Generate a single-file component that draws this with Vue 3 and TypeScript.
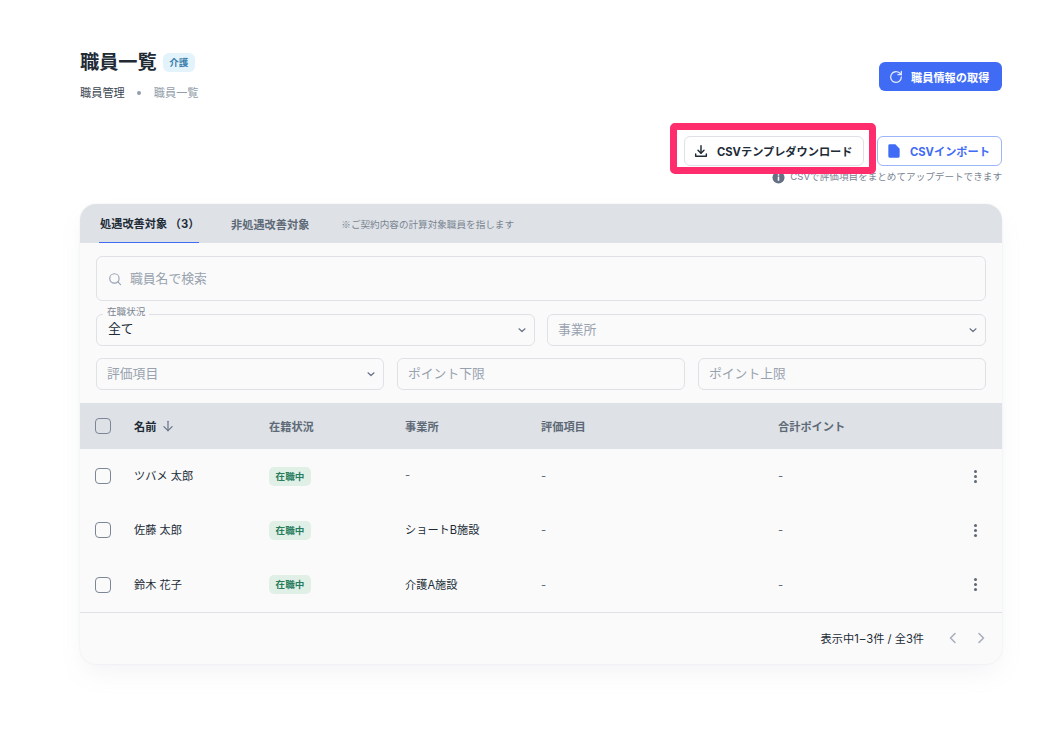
<script setup lang="ts">
interface Staff {
  name: string
  office: string
}
const columns = ['在籍状況', '事業所', '評価項目', '合計ポイント']
const staff: Staff[] = [
  { name: 'ツバメ 太郎', office: '-' },
  { name: '佐藤 太郎', office: 'ショートB施設' },
  { name: '鈴木 花子', office: '介護A施設' },
]
</script>

<template>
  <main class="page">
    <header class="head">
      <div>
        <div class="title-row">
          <h1>職員一覧</h1>
          <span class="care">介護</span>
        </div>
        <nav class="crumbs">
          <span>職員管理</span>
          <i class="dot"></i>
          <span class="muted">職員一覧</span>
        </nav>
      </div>
      <button class="btn primary">
        <svg width="16" height="16" viewBox="0 0 24 24" fill="none" stroke="currentColor" stroke-width="2" stroke-linecap="round" stroke-linejoin="round">
          <path d="M20 12a8 8 0 1 1-2.600-5.900L20 8.400" />
          <path d="M20 3.500v5h-5" />
        </svg>
        職員情報の取得
      </button>
    </header>

    <section class="actions">
      <div class="action-btns">
        <div class="highlighted">
          <button class="btn outline">
            <svg width="16" height="16" viewBox="0 0 24 24" fill="none" stroke="currentColor" stroke-width="2.200" stroke-linecap="round" stroke-linejoin="round">
              <path d="M12 4v11" />
              <path d="M7.500 11l4.500 4.500 4.500-4.500" />
              <path d="M4 16.500V20h16v-3.500" />
            </svg>
            CSVテンプレダウンロード
          </button>
          <span class="mark"></span>
        </div>
        <button class="btn import">
          <svg width="16" height="16" viewBox="0 0 24 24" fill="currentColor">
            <path d="M5.500 2H14l6.500 6.500V20a2 2 0 0 1-2 2h-13a2 2 0 0 1-2-2V4a2 2 0 0 1 2-2z" />
          </svg>
          CSVインポート
        </button>
      </div>
      <p class="hint">
        <svg width="13" height="13" viewBox="0 0 14 14">
          <circle cx="7" cy="7" r="6.500" fill="#667085" />
          <rect x="6.200" y="6" width="1.600" height="4.500" fill="#fff" />
          <rect x="6.200" y="3.400" width="1.600" height="1.600" fill="#fff" />
        </svg>
        CSVで評価項目をまとめてアップデートできます
      </p>
    </section>

    <section class="card">
      <div class="tabs">
        <span class="tab active">処遇改善対象 （3）</span>
        <span class="tab">非処遇改善対象</span>
        <span class="tab-note">※ご契約内容の計算対象職員を指します</span>
      </div>

      <div class="filters">
        <div class="field search">
          <svg width="14" height="14" viewBox="0 0 24 24" fill="none" stroke="#98a2b3" stroke-width="2" stroke-linecap="round">
            <circle cx="11" cy="11" r="8" />
            <path d="M17 17l4.500 4.500" />
          </svg>
          <span class="placeholder">職員名で検索</span>
        </div>
        <div class="two">
          <div class="field select">
            <span class="legend">在職状況</span>
            <span class="value">全て</span>
            <svg class="chev" width="10" height="10" viewBox="0 0 10 10" fill="none" stroke="#667085" stroke-width="1.200" stroke-linecap="round" stroke-linejoin="round"><path d="M2 3.800l3 2.700 3-2.700" /></svg>
          </div>
          <div class="field select">
            <span class="placeholder">事業所</span>
            <svg class="chev" width="10" height="10" viewBox="0 0 10 10" fill="none" stroke="#667085" stroke-width="1.200" stroke-linecap="round" stroke-linejoin="round"><path d="M2 3.800l3 2.700 3-2.700" /></svg>
          </div>
        </div>
        <div class="three">
          <div class="field select">
            <span class="placeholder">評価項目</span>
            <svg class="chev" width="10" height="10" viewBox="0 0 10 10" fill="none" stroke="#667085" stroke-width="1.200" stroke-linecap="round" stroke-linejoin="round"><path d="M2 3.800l3 2.700 3-2.700" /></svg>
          </div>
          <div class="field select"><span class="placeholder">ポイント下限</span></div>
          <div class="field select"><span class="placeholder">ポイント上限</span></div>
        </div>
      </div>

      <div class="grid-row thead">
        <span class="check"></span>
        <span class="name-head">
          名前
          <svg width="14" height="14" viewBox="0 0 24 24" fill="none" stroke="#667085" stroke-width="2" stroke-linecap="round" stroke-linejoin="round">
            <path d="M12 4v16" />
            <path d="M5 13l7 7 7-7" />
          </svg>
        </span>
        <span v-for="c in columns" :key="c">{{ c }}</span>
        <span></span>
      </div>

      <div v-for="s in staff" :key="s.name" class="grid-row tbody">
        <span class="check"></span>
        <span class="cell">{{ s.name }}</span>
        <span class="badge-cell"><em class="status">在職中</em></span>
        <span class="cell" :class="{ dash: s.office === '-' }">{{ s.office }}</span>
        <span class="dash">-</span>
        <span class="dash">-</span>
        <span class="more"><i></i><i></i><i></i></span>
      </div>

      <footer class="foot">
        <span class="count">表示中1<b class="range">–</b>3件 / 全3件</span>
        <svg class="pager" width="16" height="16" viewBox="0 0 16 16" fill="none" stroke="#a8b0bc" stroke-width="1.600" stroke-linecap="round" stroke-linejoin="round"><path d="M10 3.500L5.500 8l4.500 4.500" /></svg>
        <svg class="pager" width="16" height="16" viewBox="0 0 16 16" fill="none" stroke="#a8b0bc" stroke-width="1.600" stroke-linecap="round" stroke-linejoin="round"><path d="M6 3.500L10.500 8 6 12.500" /></svg>
      </footer>
    </section>
  </main>
</template>

<style>
html, body { margin: 0; background: #fff; }
</style>

<style scoped>
.page {
  box-sizing: border-box;
  width: 1063px;
  height: 745px;
  padding: 50px 61px 0 80px;
  font-family: Inter, "Noto Sans CJK JP", sans-serif;
  color: #212b36;
  overflow: hidden;
}
.head {
  display: flex;
  justify-content: space-between;
  align-items: flex-start;
  height: 73px;
}
.title-row {
  display: flex;
  align-items: center;
  gap: 6px;
  height: 25px;
}
h1 {
  margin: 0;
  font-size: 19.200px;
  line-height: 25px;
  font-weight: 700;
}
.care {
  display: block;
  width: 32px;
  height: 19px;
  border-radius: 6px;
  background: #e3f3fb;
  color: #3a7fac;
  font-size: 9.600px;
  font-weight: 700;
  line-height: 19px;
  text-align: center;
}
.crumbs {
  display: flex;
  align-items: center;
  margin-top: 9px;
  font-size: 11.200px;
  line-height: 18px;
  color: #3c4651;
}
.dot {
  width: 4px;
  height: 4px;
  margin: 0 13px 0 12px;
  border-radius: 50%;
  background: #919eab;
}
.muted { color: #919eab; }
.btn {
  display: inline-flex;
  align-items: center;
  box-sizing: border-box;
  border-radius: 6px;
  font-family: inherit;
  font-size: 11.200px;
  font-weight: 700;
  padding: 0;
}
.primary {
  width: 123px;
  height: 29px;
  gap: 7px;
  padding-left: 9px;
  margin-top: 12px;
  border: 0;
  background: #3f6bf5;
  color: #fff;
}
.primary svg { color: #dfe6fd; }
.actions { height: 81px; }
.action-btns {
  display: flex;
  justify-content: flex-end;
  gap: 13px;
  padding-top: 13px;
}
.highlighted { position: relative; }
.outline {
  width: 180px;
  height: 30px;
  gap: 8px;
  padding-left: 8px;
  background: #fff;
  border: 1px solid #dfe1e6;
  color: #212b36;
}
.mark {
  position: absolute;
  left: -14px;
  top: -13px;
  width: 206px;
  height: 51px;
  box-sizing: border-box;
  border: 7px solid #ff2d6b;
  border-radius: 5px;
  pointer-events: none;
}
.import {
  width: 125px;
  height: 30px;
  gap: 8px;
  padding-left: 8px;
  background: #fff;
  border: 1px solid #9db5fa;
  color: #3f6bf5;
}
.hint {
  display: flex;
  align-items: center;
  justify-content: flex-end;
  gap: 5px;
  margin: 4px 0 0;
  font-size: 9.600px;
  line-height: 14px;
  color: #7a8592;
}
.card {
  height: 460px;
  border-radius: 16px;
  background: #fafafb;
  box-shadow: 0 0 2px rgba(145, 158, 171, 0.2), 0 12px 24px -4px rgba(145, 158, 171, 0.12);
  overflow: hidden;
}
.tabs {
  display: flex;
  align-items: center;
  height: 39px;
  box-sizing: border-box;
  padding-left: 19px;
  background: #dee1e6;
  font-size: 11.200px;
  font-weight: 700;
}
.tab {
  display: flex;
  align-items: center;
  height: 39px;
  box-sizing: border-box;
  margin-right: 32px;
  color: #5d6976;
}
.tab.active {
  width: 100px;
  padding-left: 1px;
  color: #212b36;
  border-bottom: 1px solid #3f6bf5;
}
.tab-note {
  font-family: "Noto Sans CJK JP", sans-serif;
  font-size: 9.600px;
  font-weight: 400;
  color: #7a8592;
}
.filters {
  display: flex;
  flex-direction: column;
  gap: 12px;
  height: 160px;
  box-sizing: border-box;
  padding: 13px 16px 0;
}
.field {
  position: relative;
  box-sizing: border-box;
  border: 1px solid #dfe1e6;
  border-radius: 6px;
  display: flex;
  align-items: center;
  padding-left: 10px;
  font-size: 12.800px;
}
.search {
  height: 45px;
  gap: 8px;
  padding-left: 11px;
  margin-bottom: 1px;
}
.select { height: 32px; }
.two { display: grid; grid-template-columns: 1fr 1fr; gap: 12px; }
.three { display: grid; grid-template-columns: 288px 288px 288px; gap: 13px; }
.placeholder { color: #98a2ae; margin-bottom: 3px; }
.value { color: #212b36; line-height: 1; margin: -2px 0 0 1px; }
.legend {
  position: absolute;
  left: 6px;
  top: -9px;
  padding: 0 4px;
  background: #fafafb;
  font-size: 9.600px;
  line-height: 12px;
  color: #7a8592;
}
.chev {
  position: absolute;
  right: 7px;
  top: 10px;
}
.grid-row {
  display: grid;
  grid-template-columns: 54px 135px 136px 136px 237px 170px 54px;
  align-items: center;
  font-size: 11.200px;
}
.thead {
  height: 46px;
  background: #dee1e6;
  color: #5d6976;
  font-weight: 700;
}
.thead > span { margin-bottom: 1px; }
.name-head {
  display: flex;
  align-items: center;
  gap: 5px;
  color: #212b36;
}
.tbody {
  height: 54.330px;
  color: #212b36;
}
.cell { margin-bottom: 2px; }
.badge-cell { display: flex; }
.check {
  display: block;
  box-sizing: border-box;
  width: 16px;
  height: 16px;
  margin-left: 15px;
  border: 1.500px solid #7b8794;
  border-radius: 4px;
}
.status {
  display: block;
  width: 42px;
  height: 19px;
  border-radius: 5px;
  background: #e0f0e7;
  color: #2a7d5c;
  font-size: 9.600px;
  font-style: normal;
  font-weight: 700;
  line-height: 19px;
  text-align: center;
}
.dash { color: #5d6976; }
.more {
  display: flex;
  flex-direction: column;
  align-items: center;
  gap: 2px;
}
.more i {
  width: 3px;
  height: 3px;
  border-radius: 50%;
  background: #5d6976;
}
.foot {
  display: flex;
  align-items: center;
  justify-content: flex-end;
  height: 52px;
  box-sizing: border-box;
  padding-right: 13px;
  border-top: 1px solid #dfe1e6;
  font-size: 11.200px;
}
.pager { margin-left: 12px; }
.count { margin-right: 9px; margin-bottom: 1px; }
.range { margin: 0 1px; font-weight: 400; }
</style>
